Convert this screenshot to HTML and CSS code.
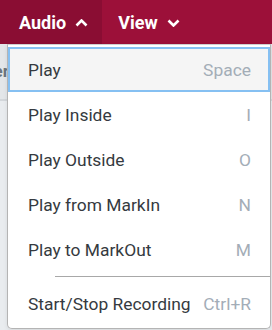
FILE: index.html
```html
<!DOCTYPE html>
<html lang="en">
<head>
    <meta charset="UTF-8">
    <meta name="viewport" content="width=device-width, initial-scale=1.0">
    <title>Audio menu</title>
    <link rel="stylesheet" href="styles.css">
</head>
<body>
    <header class="menubar">
        <div class="menu-btn active">
            <span>Audio</span>
            <svg class="chev" width="13" height="8" viewBox="0 0 13 8"><path d="M1.5 6.5 L6.5 1.5 L11.5 6.5" fill="none" stroke="#fff" stroke-width="2.6"/></svg>
        </div>
        <div class="menu-btn">
            <span>View</span>
            <svg class="chev" width="13" height="8" viewBox="0 0 13 8"><path d="M1.5 1.5 L6.5 6.5 L11.5 1.5" fill="none" stroke="#fff" stroke-width="2.6"/></svg>
        </div>
    </header>

    <main class="page">
        <div class="toolbar">
            <div class="clip">Filter</div>
        </div>
    </main>

    <!-- dropdown for the Audio menu -->
    <ul class="dropdown">
        <li class="item selected"><span>Play</span><span class="key">Space</span></li>
        <li class="item"><span>Play Inside</span><span class="key">I</span></li>
        <li class="item"><span>Play Outside</span><span class="key">O</span></li>
        <li class="item"><span>Play from MarkIn</span><span class="key">N</span></li>
        <li class="item"><span>Play to MarkOut</span><span class="key">M</span></li>
        <li class="sep"></li>
        <li class="item"><span>Start/Stop Recording</span><span class="key">Ctrl+R</span></li>
    </ul>
</body>
</html>
```

FILE: styles.css
```css
body {
    margin: 0;
    font-family: Roboto, 'Liberation Sans', sans-serif;
    background-color: #e9ecef;
    width: 272px;
    height: 330px;
    overflow: hidden;
    position: relative;
}

.menubar {
    display: flex;
    height: 44px;
    background-color: #9c1039;
}

.menu-btn {
    display: flex;
    align-items: center;
    gap: 9px;
    padding: 0 14px 0 16px;
    color: #fff;
    font-weight: bold;
    font-size: 18px;
}

.menu-btn.active {
    background-color: #8a0d33;
    padding-left: 19px;
}

.chev {
    display: block;
    margin-top: 1px;
}

.page {
    height: 286px;
}

.toolbar {
    height: 38px;
    padding-top: 17px;
    border-bottom: 2px solid #d3d7db;
    background-color: #e3e6e9;
}

.clip {
    width: 9px;
    overflow: hidden;
    direction: rtl;
    white-space: nowrap;
    font-size: 17px;
    font-weight: bold;
    color: #6a7580;
}

.dropdown {
    position: absolute;
    top: 44px;
    left: 7px;
    width: 262px;
    margin: 0;
    padding: 1px 0 2px;
    list-style: none;
    background-color: #fff;
    border: 1px solid #b4b4b4;
    border-top-color: #d0d0d0;
    border-radius: 0 0 5px 5px;
    box-shadow: 0 2px 4px rgba(0, 0, 0, 0.08);
}

.item {
    display: flex;
    justify-content: space-between;
    align-items: center;
    height: 45px;
    padding: 0 19px 0 20px;
    font-size: 17.4px;
    color: #353a40;
    box-sizing: border-box;
}

.item.selected {
    background-color: #f5f5f5;
    border: 2px solid #86c0f2;
    padding: 0 17px 0 18px;
    margin-top: 1px;
}

.key {
    color: #a3adb7;
}

.sep {
    height: 1px;
    margin: 4px 0 4px 47px;
    background-color: #a8a8a8;
}
```
